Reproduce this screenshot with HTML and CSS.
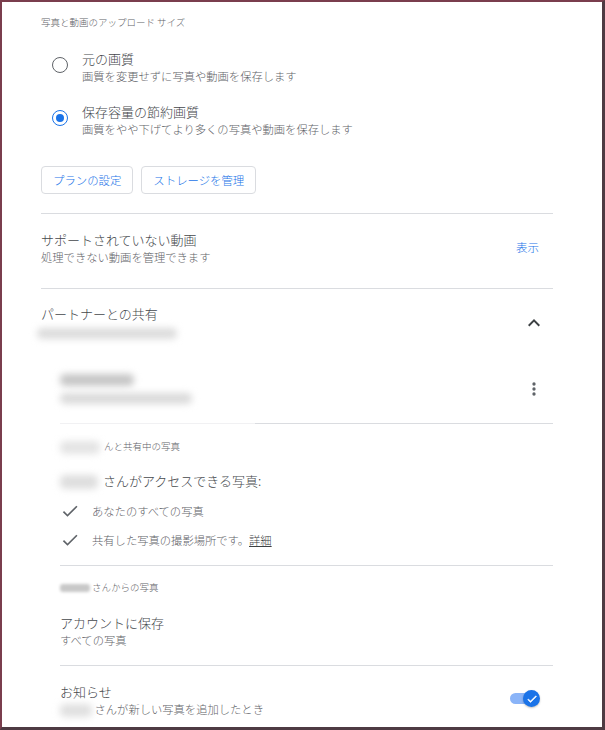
FILE: index.html
```html
<!DOCTYPE html>
<html lang="ja">
<head>
<meta charset="utf-8">
<title>設定</title>
<link rel="stylesheet" href="styles.css">
</head>
<body>
<div class="frame">
  <div class="content">
    <div class="caption">写真と動画のアップロード サイズ</div>

    <div class="options">
      <div class="option">
        <span class="radio"></span>
        <div>
          <div class="title">元の画質</div>
          <div class="sub">画質を変更せずに写真や動画を保存します</div>
        </div>
      </div>
      <div class="option">
        <span class="radio checked"></span>
        <div>
          <div class="title">保存容量の節約画質</div>
          <div class="sub">画質をやや下げてより多くの写真や動画を保存します</div>
        </div>
      </div>
    </div>

    <div class="buttons">
      <span class="btn">プランの設定</span>
      <span class="btn">ストレージを管理</span>
    </div>

    <div class="divider d1"></div>

    <div class="row">
      <div>
        <div class="title">サポートされていない動画</div>
        <div class="sub">処理できない動画を管理できます</div>
      </div>
      <span class="action">表示</span>
    </div>

    <div class="divider"></div>

    <div class="partner">
      <div class="partner-head">
        <div>
          <div class="title">パートナーとの共有</div>
          <div class="blur-line email-line"><span class="smudge s-email"></span></div>
        </div>
        <svg class="chevron" width="24" height="24" viewBox="0 0 24 24"><path d="M12 8l-6 6 1.41 1.41L12 10.83l4.59 4.58L18 14z" fill="#3c4043"/></svg>
      </div>

      <div class="indent">
        <div class="member">
          <div>
            <div class="blur-line"><span class="smudge s-name"></span></div>
            <div class="blur-line mail-line"><span class="smudge s-mail"></span></div>
          </div>
          <svg class="dots" width="20" height="20" viewBox="0 0 24 24"><circle cx="12" cy="6" r="2" fill="#5f6368"/><circle cx="12" cy="12" r="2" fill="#5f6368"/><circle cx="12" cy="18" r="2" fill="#5f6368"/></svg>
        </div>

        <div class="divider d3"></div>

        <div class="label l1"><span class="smudge s-l1"></span>んと共有中の写真</div>

        <div class="access"><span class="smudge s-access"></span>さんがアクセスできる写真:</div>

        <div class="checks">
          <div class="check">
            <svg width="20" height="20" viewBox="0 0 24 24"><path d="M9 16.17L4.83 12l-1.42 1.41L9 19 21 7l-1.41-1.41z" fill="#5f6368"/></svg>
            <span>あなたのすべての写真</span>
          </div>
          <div class="check">
            <svg width="20" height="20" viewBox="0 0 24 24"><path d="M9 16.17L4.83 12l-1.42 1.41L9 19 21 7l-1.41-1.41z" fill="#5f6368"/></svg>
            <span>共有した写真の撮影場所です。<span class="link">詳細</span></span>
          </div>
        </div>

        <div class="divider d4"></div>

        <div class="label l2"><span class="smudge s-l2"></span> さんからの写真</div>

        <div class="save">
          <div class="title">アカウントに保存</div>
          <div class="sub">すべての写真</div>
        </div>

        <div class="divider d5"></div>

        <div class="notify">
          <div>
            <div class="title">お知らせ</div>
            <div class="sub"><span class="smudge s-notify"></span> さんが新しい写真を追加したとき</div>
          </div>
          <span class="toggle">
            <span class="track"></span>
            <span class="thumb"><svg width="12" height="12" viewBox="0 0 24 24"><path d="M9 16.17L4.83 12l-1.42 1.41L9 19 21 7l-1.41-1.41z" fill="#fff" stroke="#fff" stroke-width="1"/></svg></span>
          </span>
        </div>
      </div>
    </div>
  </div>
</div>
</body>
</html>
```

FILE: styles.css
```css
html, body {
  margin: 0;
  padding: 0;
  background: #fff;
}

body {
  font-family: "Noto Sans CJK JP", "Noto Sans", "Liberation Sans", sans-serif;
  font-weight: 300;
  color: #3c4043;
}

.frame {
  width: 605px;
  height: 730px;
  box-sizing: border-box;
  border-style: solid;
  border-width: 2px 3px 3px 2px;
  border-color: #7a3d4d #4e3b43 #4e3b43 #7a3d4d;
  background: #fff;
  overflow: hidden;
}

.content {
  margin-left: 39px;
  width: 512px;
}

.caption {
  padding-top: 13px;
  font-size: 9.5px;
  line-height: 14px;
  color: #5f6368;
}

.title {
  font-size: 13px;
  line-height: 16px;
  color: #45484c;
}

.sub {
  margin-top: 1px;
  font-size: 11.3px;
  line-height: 16px;
  color: #5f6368;
}

.options {
  margin-top: 22px;
  display: flex;
  flex-direction: column;
  gap: 20px;
}

.option {
  display: flex;
  align-items: flex-start;
}

.radio {
  flex: none;
  width: 16px;
  height: 16px;
  box-sizing: border-box;
  border: 1.8px solid #5f6368;
  border-radius: 50%;
  margin: 6px 14px 0 11px;
  display: flex;
  align-items: center;
  justify-content: center;
}

.radio.checked {
  border-color: #1a73e8;
}

.radio.checked::after {
  content: "";
  width: 8px;
  height: 8px;
  border-radius: 50%;
  background: #1a73e8;
}

.buttons {
  margin-top: 29px;
  display: flex;
  gap: 8px;
}

.btn {
  height: 28px;
  box-sizing: border-box;
  border: 1px solid #dadce0;
  border-radius: 4px;
  padding: 0 11px;
  display: flex;
  align-items: center;
  font-size: 11.4px;
  color: #1a73e8;
}

.divider {
  height: 1px;
  background: #dadce0;
}

.d1 {
  margin-top: 19px;
}

.row {
  display: flex;
  align-items: center;
  justify-content: space-between;
  padding: 18px 0 23px;
}

.action {
  font-size: 11.5px;
  line-height: 16px;
  color: #1a73e8;
  margin-right: 14px;
  margin-bottom: 3px;
}

.partner {
  padding-top: 17px;
}

.partner-head {
  display: flex;
  justify-content: space-between;
  align-items: flex-start;
}

.chevron {
  margin-top: 5px;
  margin-right: 7px;
}

.blur-line {
  height: 16px;
  display: flex;
  align-items: center;
}

.email-line {
  margin-top: 3px;
  margin-left: -4px;
}

.mail-line {
  margin-top: 2px;
}

.smudge {
  display: inline-block;
  height: 11px;
  margin-top: -4px;
  margin-bottom: -4px;
  border-radius: 5px;
  background: #d4d4d4;
  filter: blur(3.5px);
  vertical-align: middle;
}

.s-email {
  width: 140px;
  height: 11px;
  background: #dcdcdc;
}

.s-name {
  width: 74px;
  height: 12px;
  background: #c6c6c6;
}

.s-mail {
  width: 132px;
  height: 11px;
  background: #dadada;
}

.s-l1 {
  width: 40px;
  height: 13px;
  margin-right: 4px;
  background: #e4e4e4;
}

.s-access {
  width: 38px;
  height: 14px;
  margin-right: 5px;
  background: #dedede;
}

.s-l2 {
  width: 30px;
  height: 8px;
  background: #c8c8c8;
  filter: blur(1.5px);
  border-radius: 3px;
}

.s-notify {
  width: 32px;
  height: 13px;
  background: #e0e0e0;
}

.indent {
  margin-left: 19px;
}

.member {
  margin-top: 31px;
  display: flex;
  justify-content: space-between;
  align-items: center;
}

.dots {
  margin-right: 9px;
}

.d3 {
  margin-top: 17px;
  background: linear-gradient(to right, #f1f1f3 0, #f1f1f3 195px, #dadce0 195px);
}

.label {
  font-size: 9.5px;
  line-height: 14px;
  color: #5f6368;
}

.l1 {
  margin-top: 15px;
}

.access {
  margin-top: 19px;
  font-size: 13px;
  line-height: 18px;
  color: #45484c;
}

.checks {
  margin-top: 6px;
}

.check {
  height: 29px;
  display: flex;
  align-items: center;
  font-size: 11.3px;
  color: #5f6368;
}

.check svg {
  margin-right: 12px;
  flex: none;
}

.link {
  color: #3c4043;
  text-decoration: underline;
}

.d4 {
  margin-top: 11px;
}

.l2 {
  margin-top: 14px;
}

.save {
  margin-top: 21px;
}

.d5 {
  margin-top: 17px;
}

.notify {
  margin-top: 18px;
  display: flex;
  justify-content: space-between;
  align-items: center;
}

.toggle {
  position: relative;
  width: 30px;
  height: 17px;
  margin-right: 13px;
  margin-bottom: 4px;
  display: flex;
  align-items: center;
}

.track {
  width: 26px;
  height: 11px;
  border-radius: 6px;
  background: #8ab4f8;
}

.thumb {
  position: absolute;
  right: 0;
  top: 0;
  width: 17px;
  height: 17px;
  border-radius: 50%;
  background: #1a73e8;
  display: flex;
  align-items: center;
  justify-content: center;
  box-shadow: 0 1px 2px rgba(0,0,0,0.25);
}
```
